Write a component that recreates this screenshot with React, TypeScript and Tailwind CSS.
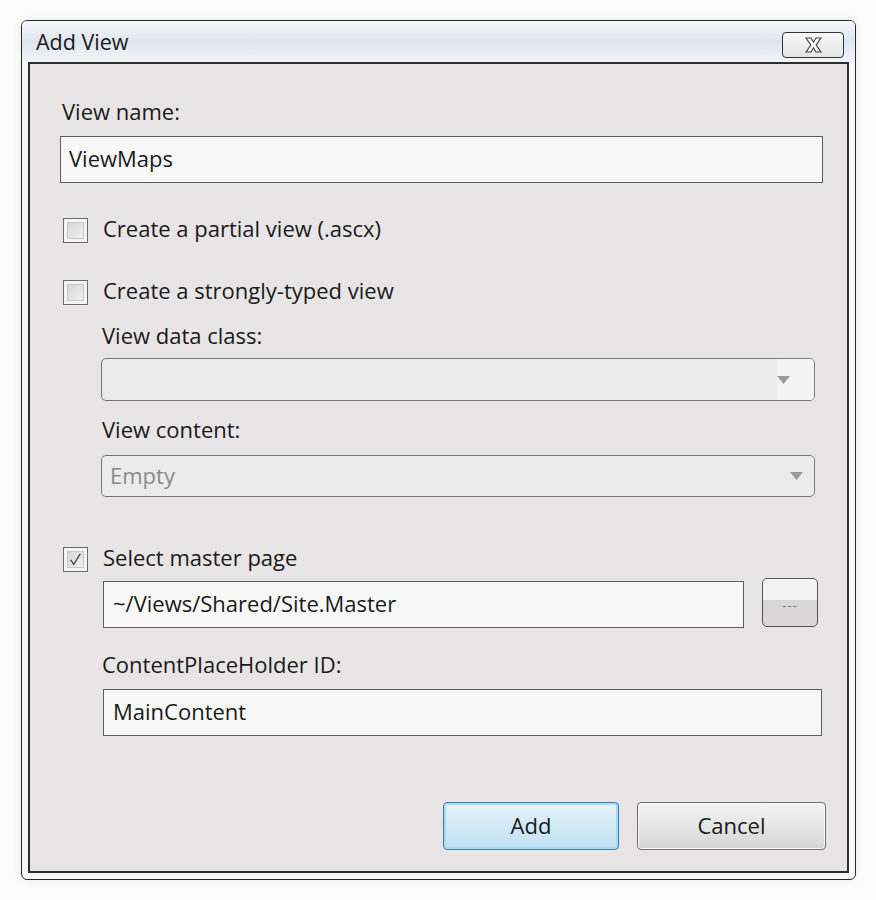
import React from 'react';

const font = { fontFamily: '"Open Sans", "Noto Sans", sans-serif' };

function CheckBox({ checked }: { checked?: boolean }) {
  return (
    <div className="w-[25px] h-[25px] border border-[#6b6b6b] bg-[#f4f4f4] p-[3px] shrink-0">
      <div className="w-full h-full border border-[#c9c9c9] bg-gradient-to-br from-[#d6d6d6] to-[#f0f0f0] relative">
        {checked && (
          <svg viewBox="0 0 17 17" className="absolute inset-0 w-full h-full">
            <path d="M3 9 L6.5 14 L14 2" fill="none" stroke="#3a3a3a" strokeWidth="1.4" />
          </svg>
        )}
      </div>
    </div>
  );
}

function Arrow() {
  return (
    <svg width="13" height="8" viewBox="0 0 13 8" className="shrink-0">
      <path d="M0 0 L13 0 L6.5 8 Z" fill="#9a9a9a" />
    </svg>
  );
}

export default function App() {
  return (
    <div className="w-[876px] h-[900px] bg-[#fcfcfc] pl-[21px] pt-[20px]" style={font}>
      <div className="w-[835px] h-[860px] rounded-[6px] border border-[#2a2a2a] bg-[#f7f7f8] shadow-[0_0_10px_rgba(0,0,0,0.08)] flex flex-col overflow-hidden">
        <div className="h-[41px] shrink-0 flex items-center justify-between pl-[14px] pr-[11px] bg-gradient-to-b from-[#f7f8fa] via-[#dfe6f0] to-[#f3f4f6]">
          <span className="text-[21.5px] text-[#1a1a1a] leading-none">Add View</span>
          <div className="w-[62px] h-[26px] mt-[6px] rounded-[4px] border border-[#333] bg-gradient-to-b from-[#f8f8f8] to-[#e4e4e4] flex items-center justify-center">
            <svg width="17" height="16" viewBox="0 0 17 16">
              <path
                d="M1 1 H6 L8.5 5.2 L11 1 H16 L11.2 8 L16 15 H11 L8.5 10.8 L6 15 H1 L5.8 8 Z"
                fill="#fafafa"
                stroke="#404040"
                strokeWidth="1.2"
              />
            </svg>
          </div>
        </div>
        <div className="mx-[6px] mb-[6px] flex-1 border-2 border-[#2e2e2e] bg-[#e7e5e5] text-[#1a1a1a] text-[22px]">
          <div className="h-[28px] mt-[35px] pl-[32px] pb-[4px] flex items-center">View name:</div>
          <div className="ml-[30px] mt-[9px] w-[763px] h-[47px] border border-[#5e5e5e] bg-[#f8f8f8] flex items-center pl-[8px] pb-[2px]">
            ViewMaps
          </div>

          <div className="h-[28px] mt-[33px] pl-[33px] flex items-center gap-[15px]">
            <CheckBox />
            <span className="pb-[4px]">Create a partial view (.ascx)</span>
          </div>
          <div className="h-[28px] mt-[34px] pl-[33px] flex items-center gap-[15px]">
            <CheckBox />
            <span className="pb-[4px]">Create a strongly-typed view</span>
          </div>

          <div className="h-[28px] mt-[17px] pl-[72px] pb-[4px] flex items-center">View data class:</div>
          <div className="ml-[71px] mt-[7px] w-[714px] h-[43px] rounded-[5px] border border-[#7a7a7a] bg-[#eaeaea] flex overflow-hidden">
            <div className="flex-1" />
            <div className="w-[37px] bg-[#f3f3f3] flex items-center justify-start">
              <Arrow />
            </div>
          </div>

          <div className="h-[28px] mt-[16px] pl-[72px] pb-[4px] flex items-center">View content:</div>
          <div className="ml-[71px] mt-[10px] w-[714px] h-[42px] rounded-[5px] border border-[#7a7a7a] bg-[#ebebeb] flex items-center justify-between pl-[8px] pr-[11px]">
            <span className="text-[#8a8a8a] pb-[2px]">Empty</span>
            <Arrow />
          </div>

          <div className="h-[28px] mt-[48px] pl-[33px] flex items-center gap-[15px]">
            <CheckBox checked />
            <span className="pb-[4px]">Select master page</span>
          </div>
          <div className="mt-[5px] ml-[73px] flex items-start gap-[18px]">
            <div className="mt-[3px] w-[641px] h-[47px] border border-[#5e5e5e] bg-[#f8f8f8] flex items-center pl-[9px] pb-[2px]">
              ~/Views/Shared/Site.Master
            </div>
            <div className="w-[56px] h-[49px] rounded-[5px] border border-[#555] bg-gradient-to-b from-[#f3f3f3] from-45% to-[#d8d6d6] to-45% flex items-end justify-center pb-[14px] text-[#777] text-[13px] leading-none tracking-[1px]">
              ---
            </div>
          </div>

          <div className="h-[28px] mt-[24px] pl-[72px] pb-[4px] flex items-center">ContentPlaceHolder ID:</div>
          <div className="ml-[73px] mt-[9px] w-[719px] h-[47px] border border-[#5e5e5e] bg-[#f8f8f8] flex items-center pl-[9px] pb-[2px]">
            MainContent
          </div>

          <div className="mt-[66px] flex justify-end gap-[18px] pr-[21px]">
            <button className="w-[176px] h-[48px] rounded-[4px] border border-[#3a7fb0] shadow-[inset_0_0_0_2px_#a6daf5] bg-gradient-to-b from-[#e6f3fa] to-[#c0e1f3] text-[22px] text-[#1a1a1a] pb-[2px]">
              Add
            </button>
            <button className="w-[189px] h-[48px] rounded-[4px] border border-[#6f6f6f] shadow-[inset_0_0_0_1px_#fafafa] bg-gradient-to-b from-[#f4f4f4] to-[#d6d6d6] text-[22px] text-[#1a1a1a] pb-[2px]">
              Cancel
            </button>
          </div>
        </div>
      </div>
    </div>
  );
}
